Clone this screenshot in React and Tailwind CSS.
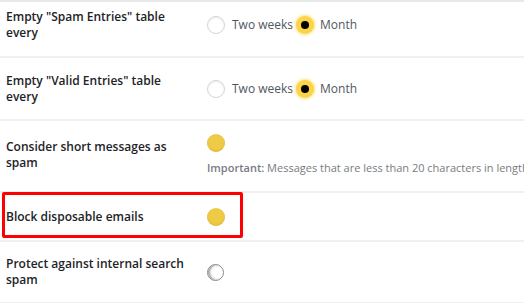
import React from "react";

const font = { fontFamily: '"Open Sans", "Noto Sans", sans-serif' };

function Radio({ checked }) {
    if (checked) {
        return (
            <span className="flex items-center justify-center w-[18px] h-[18px] rounded-full bg-[#fcd447] shadow-[0_0_3px_1px_rgba(252,212,71,0.7)] shrink-0">
                <span className="w-[8px] h-[8px] rounded-full bg-black"></span>
            </span>
        );
    }
    return <span className="w-[18px] h-[18px] rounded-full bg-white border border-[#d5d5d5] shadow-[inset_0_1px_2px_rgba(0,0,0,0.08)] shrink-0"></span>;
}

function Toggle({ on }) {
    if (on) {
        return <span className="block w-[18px] h-[18px] rounded-full bg-[#efcb45] shadow-[inset_0_-1px_2px_rgba(180,140,20,0.35)]"></span>;
    }
    return <span className="block w-[17px] h-[17px] rounded-full bg-white border-[1.5px] border-[#8a8a8a] shadow-[inset_2px_0_2px_rgba(0,0,0,0.35)]"></span>;
}

function RadioGroup() {
    return (
        <div className="flex items-center text-[12px] leading-[16px] text-[#50575e]">
            <Radio checked={false} />
            <span className="ml-[7px]">Two weeks</span>
            <span className="ml-[3px]"><Radio checked={true} /></span>
            <span className="ml-[6px]">Month</span>
        </div>
    );
}

function Row({ label, children, className = "", highlight = false }) {
    return (
        <div className={`relative flex items-center border-b-2 border-[#f0f0f1] ${className}`}>
            <div className="w-[207px] shrink-0 pl-[6px] pr-[16px] text-[12px] leading-[16px] font-semibold text-[#1d2327]">
                {label}
            </div>
            <div className="flex-1 min-w-0">{children}</div>
            {highlight && (
                <div className="absolute left-[2px] top-[-1px] w-[241px] h-[46px] border-[3px] border-[#ff0000] rounded-[2px]"></div>
            )}
        </div>
    );
}

export default function App() {
    return (
        <div className="w-[524px] h-[303px] bg-white overflow-hidden border-t-2 border-[#e8e8e8]" style={font}>
            <Row label={'Empty "Spam Entries" table every'} className="pt-[7px] pb-[15px]">
                <RadioGroup />
            </Row>
            <Row label={'Empty "Valid Entries" table every'} className="pt-[15px] pb-[14px]">
                <RadioGroup />
            </Row>
            <Row label="Consider short messages as spam" className="pt-[13px] pb-[15px]">
                <div className="flex flex-col">
                    <Toggle on={true} />
                    <p className="mt-[8px] text-[11px] leading-[16px] text-[#787c82] whitespace-nowrap">
                        <span className="font-semibold">Important:</span> Messages that are less than 20 characters in length
                    </p>
                </div>
            </Row>
            <Row label="Block disposable emails" className="pt-[15px] pb-[14px]" highlight={true}>
                <Toggle on={true} />
            </Row>
            <Row label="Protect against internal search spam" className="pt-[14px] pb-[14px]">
                <Toggle on={false} />
            </Row>
        </div>
    );
}
